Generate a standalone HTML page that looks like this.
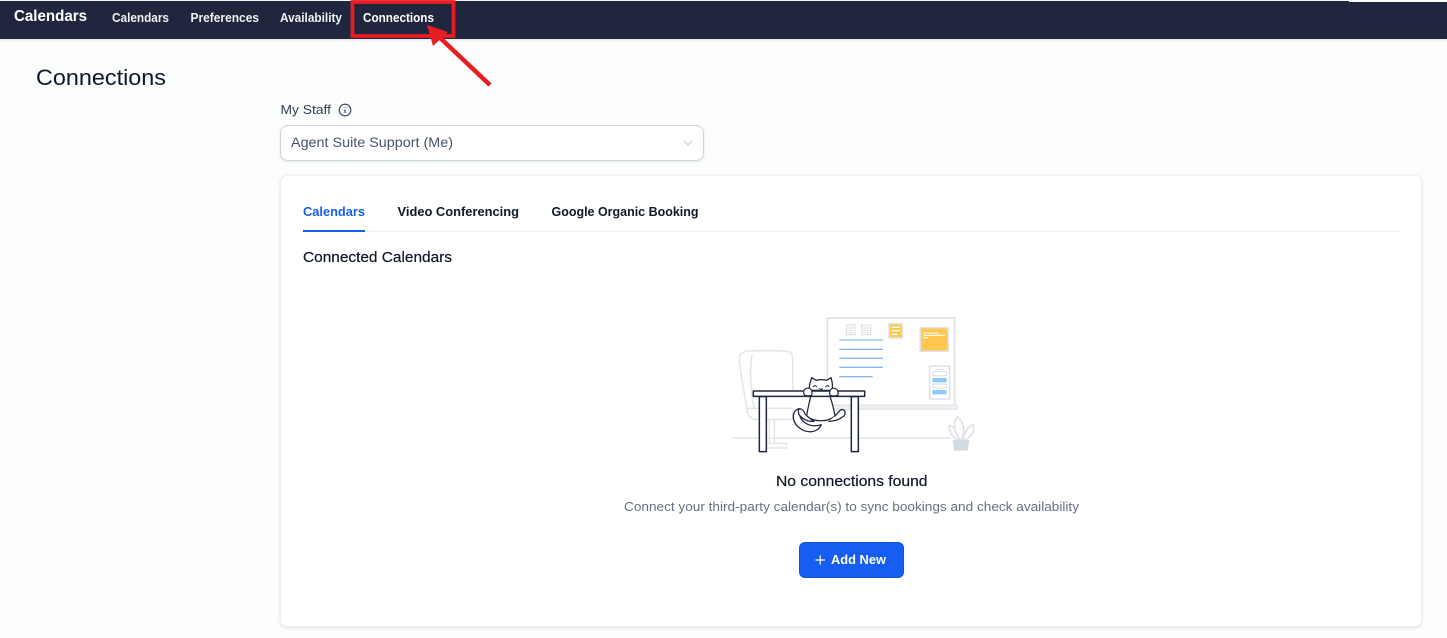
<!DOCTYPE html>
<html><head><meta charset="utf-8"><title>Connections</title>
<style>
html,body{margin:0;padding:0;width:1447px;height:638px;overflow:hidden;background:#fcfdfd;font-family:"Liberation Sans",sans-serif}
.nav{position:absolute;left:0;top:1px;width:1447px;height:38px;background:#20263e;box-shadow:0 1px 3px rgba(16,24,40,.12)}
.sel{position:absolute;left:280px;top:125px;width:422px;height:34px;background:#fff;border:1px solid #d0d5dd;border-radius:8px;box-shadow:0 1px 2px rgba(16,24,40,.1)}
.card{position:absolute;left:280px;top:175px;width:1140px;height:450px;background:#fff;border:1px solid #eef0f3;border-radius:7px;box-shadow:0 1px 3px rgba(16,24,40,.12)}
.btn{position:absolute;left:799px;top:542px;width:103px;height:34px;background:#155eef;border:1px solid #1352d0;border-radius:6px}
svg{position:absolute;left:0;top:0}
text{font-family:"Liberation Sans",sans-serif}
</style></head><body>
<div class="nav"></div>
<div class="sel"></div>
<div class="card"></div>
<div class="btn"></div>
<svg width="1447" height="638" viewBox="0 0 1447 638">
<g fill="#fff" font-weight="700">
<text x="14" y="21" font-size="16" textLength="73" lengthAdjust="spacingAndGlyphs">Calendars</text>
<text x="112" y="22" font-size="12.5" textLength="57" lengthAdjust="spacingAndGlyphs" fill="#f0f1f4">Calendars</text>
<text x="190.500" y="22" font-size="12.5" textLength="68.500" lengthAdjust="spacingAndGlyphs" fill="#f0f1f4">Preferences</text>
<text x="280" y="22" font-size="12.5" textLength="62" lengthAdjust="spacingAndGlyphs" fill="#f0f1f4">Availability</text>
<text x="363" y="22" font-size="12.5" textLength="71" lengthAdjust="spacingAndGlyphs">Connections</text>
</g>
<text x="36" y="85" font-size="22" fill="#101828" textLength="130" lengthAdjust="spacingAndGlyphs">Connections</text>
<text x="280.500" y="114" font-size="13" fill="#344054" textLength="50.500" lengthAdjust="spacingAndGlyphs">My Staff</text>
<circle cx="345" cy="110" r="5.800" fill="none" stroke="#344054" stroke-width="1.100"/>
<path d="M345 109.500V113M345 107V107.800" stroke="#344054" stroke-width="1.200" fill="none"/>
<text x="291" y="147" font-size="14" fill="#475467" textLength="162" lengthAdjust="spacingAndGlyphs">Agent Suite Support (Me)</text>
<path d="M684 141L688 145L692 141" fill="none" stroke="#c4c9d2" stroke-width="1"/>
<rect x="303" y="231" width="1097" height="1" fill="#eef0f3"/>
<rect x="303" y="230" width="62" height="2" fill="#155eef"/>
<g font-size="12.500" font-weight="700">
<text x="303" y="216" fill="#155eef" textLength="62" lengthAdjust="spacingAndGlyphs">Calendars</text>
<text x="397.500" y="216" fill="#101828" textLength="121.500" lengthAdjust="spacingAndGlyphs">Video Conferencing</text>
<text x="551.500" y="216" fill="#101828" textLength="147" lengthAdjust="spacingAndGlyphs">Google Organic Booking</text>
</g>
<text x="303" y="262" font-size="14.500" fill="#101828" stroke="#101828" stroke-width=".2" textLength="149" lengthAdjust="spacingAndGlyphs">Connected Calendars</text>
<text x="776" y="486" font-size="14.500" fill="#101828" stroke="#101828" stroke-width=".2" textLength="151.500" lengthAdjust="spacingAndGlyphs">No connections found</text>
<text x="624" y="511" font-size="13" fill="#667085" textLength="455" lengthAdjust="spacingAndGlyphs">Connect your third-party calendar(s) to sync bookings and check availability</text>
<path d="M815.500 560H825M820.200 555.300V564.700" stroke="#fff" stroke-width="1.200" fill="none"/>
<text x="831" y="564" font-size="13" font-weight="700" fill="#fff" textLength="55" lengthAdjust="spacingAndGlyphs">Add New</text>

<!-- illustration, drawn in 3x crop coordinates -->
<g transform="translate(720 310) scale(.33333)" fill="none" stroke-linejoin="round" stroke-linecap="round">
<path d="M37 384H690" stroke="#e2e5ea" stroke-width="4.500"/>
<!-- chair -->
<path d="M80 295C70 230 58 170 58 145C58 130 68 124 85 123C120 121 180 121 205 125C215 127 218 135 218 150V240M96 135C88 170 92 250 102 295" stroke="#e3e5ea" stroke-width="4.500"/>
<path d="M80 295H218V328H105C92 328 82 315 80 295Z" stroke="#e3e5ea" stroke-width="4.500" fill="#fff"/>
<path d="M148 328V400M163 328V400" stroke="#e3e5ea" stroke-width="4.500"/>
<rect x="140" y="400" width="59" height="14" stroke="#e3e5ea" stroke-width="4.500" fill="#fff"/>
<!-- board -->
<rect x="322" y="24" width="382" height="262" stroke="#dfe2e8" stroke-width="5" fill="#fff"/>
<rect x="322" y="286" width="390" height="12" fill="#eef0f3" stroke="#e2e5ea" stroke-width="4"/>
<!-- mini clipboards -->
<rect x="380" y="45" width="25" height="29" stroke="#dfe2e8" stroke-width="4"/>
<path d="M386 54H399M386 61H399M386 68H399" stroke="#dfe2e8" stroke-width="3.500"/>
<rect x="425" y="45" width="27" height="29" stroke="#dfe2e8" stroke-width="4"/>
<path d="M431 54H446M431 61H446M431 68H446" stroke="#dfe2e8" stroke-width="3.500"/>
<!-- lines -->
<path d="M358 90H489M358 118H489M358 145H489M358 172H489M358 200H458" stroke="#8db8f5" stroke-width="4" stroke-linecap="butt"/>
<!-- note -->
<rect x="507" y="41" width="40" height="43" fill="#ffc74d" stroke="#dfe2e8" stroke-width="5"/>
<path d="M515 52H540M515 62H540M515 73H532" stroke="#fff" stroke-width="4" stroke-linecap="butt"/>
<!-- folder -->
<rect x="601" y="53" width="84" height="71" fill="#ffc74d" stroke="#dfe2e8" stroke-width="5"/>
<path d="M610 69H656M610 76H675M610 83H625" stroke="#fff5dc" stroke-width="4" stroke-linecap="butt"/>
<!-- clipboard -->
<rect x="629" y="168" width="60" height="99" fill="#fff" stroke="#dfe2e8" stroke-width="4.500"/>
<path d="M648 178H670" stroke="#dfe2e8" stroke-width="3.500"/>
<rect x="638" y="185" width="42" height="12" rx="4" stroke="#dfe2e8" stroke-width="3.500"/>
<rect x="637" y="204" width="43" height="13" rx="4" fill="#8ec8fb"/>
<rect x="638" y="222" width="42" height="12" rx="4" stroke="#dfe2e8" stroke-width="3.500"/>
<rect x="637" y="240" width="43" height="13" rx="4" fill="#8ec8fb"/>
<!-- plant -->
<path d="M716 392C700 385 686 368 688 346C706 350 716 368 718 392Z" stroke="#dfe2e8" stroke-width="5" fill="#fff"/>
<path d="M722 392C698 365 700 335 712 320C732 338 738 365 722 392Z" stroke="#dfe2e8" stroke-width="5" fill="#fff"/>
<path d="M730 392C732 368 744 350 760 343C764 365 752 385 730 392Z" stroke="#dfe2e8" stroke-width="5" fill="#fff"/>
<path d="M698 390H748L743 422H703Z" fill="#d5d9e0"/>
<!-- cat -->
<g stroke="#20263e" stroke-width="3.800">
<path d="M238 296C215 300 212 335 240 355C262 370 292 370 304 344C280 352 250 345 240 320" fill="#fff"/>
<path d="M272 258C268 280 262 300 260 318C280 337 325 337 345 318C342 298 336 278 330 258" fill="#fff"/>
<path d="M235 300C240 292 252 300 255 312C262 320 270 326 282 334C262 336 245 326 236 312Z" fill="#fff"/>
<path d="M345 318C352 312 358 300 366 298C376 300 378 310 372 318C362 326 345 334 326 334" fill="#fff"/>
<path d="M268 241C266 226 271 216 275 203L289 211Q305 207 320 211L333 203C337 216 339 228 336 241Z" fill="#fff"/>
<path d="M280 230Q285 224 290 230M317 230Q322 224 327 230M299 236Q303 240 307 236" stroke-width="3"/>
</g>
<!-- desk -->
<rect x="100" y="243" width="334" height="16" fill="#fff" stroke="#20263e" stroke-width="4.500"/>
<rect x="118" y="260" width="21" height="165" fill="#fff" stroke="#20263e" stroke-width="4.500"/>
<rect x="394" y="260" width="21" height="165" fill="#fff" stroke="#20263e" stroke-width="4.500"/>
<g stroke="#20263e" stroke-width="3.500" fill="#fff">
<path d="M252 253C248 240 257 233 265 235C274 234 278 245 275 256C266 258 257 259 252 253Z"/>
<path d="M330 255C326 242 334 233 342 235C351 234 356 245 354 255C346 258 336 259 330 255Z"/>
</g>
</g>

<!-- annotation -->
<rect x="352.500" y="2" width="101" height="34" fill="none" stroke="#e81c23" stroke-width="3.800"/>
<path d="M490 85L436 34" stroke="#e81c23" stroke-width="4.500" fill="none"/>
<path d="M427 25L448 32L433 46Z" fill="#e81c23"/>
<rect x="1349" y="0" width="98" height="2" fill="#fcfdfd"/>
</svg>
</body></html>
